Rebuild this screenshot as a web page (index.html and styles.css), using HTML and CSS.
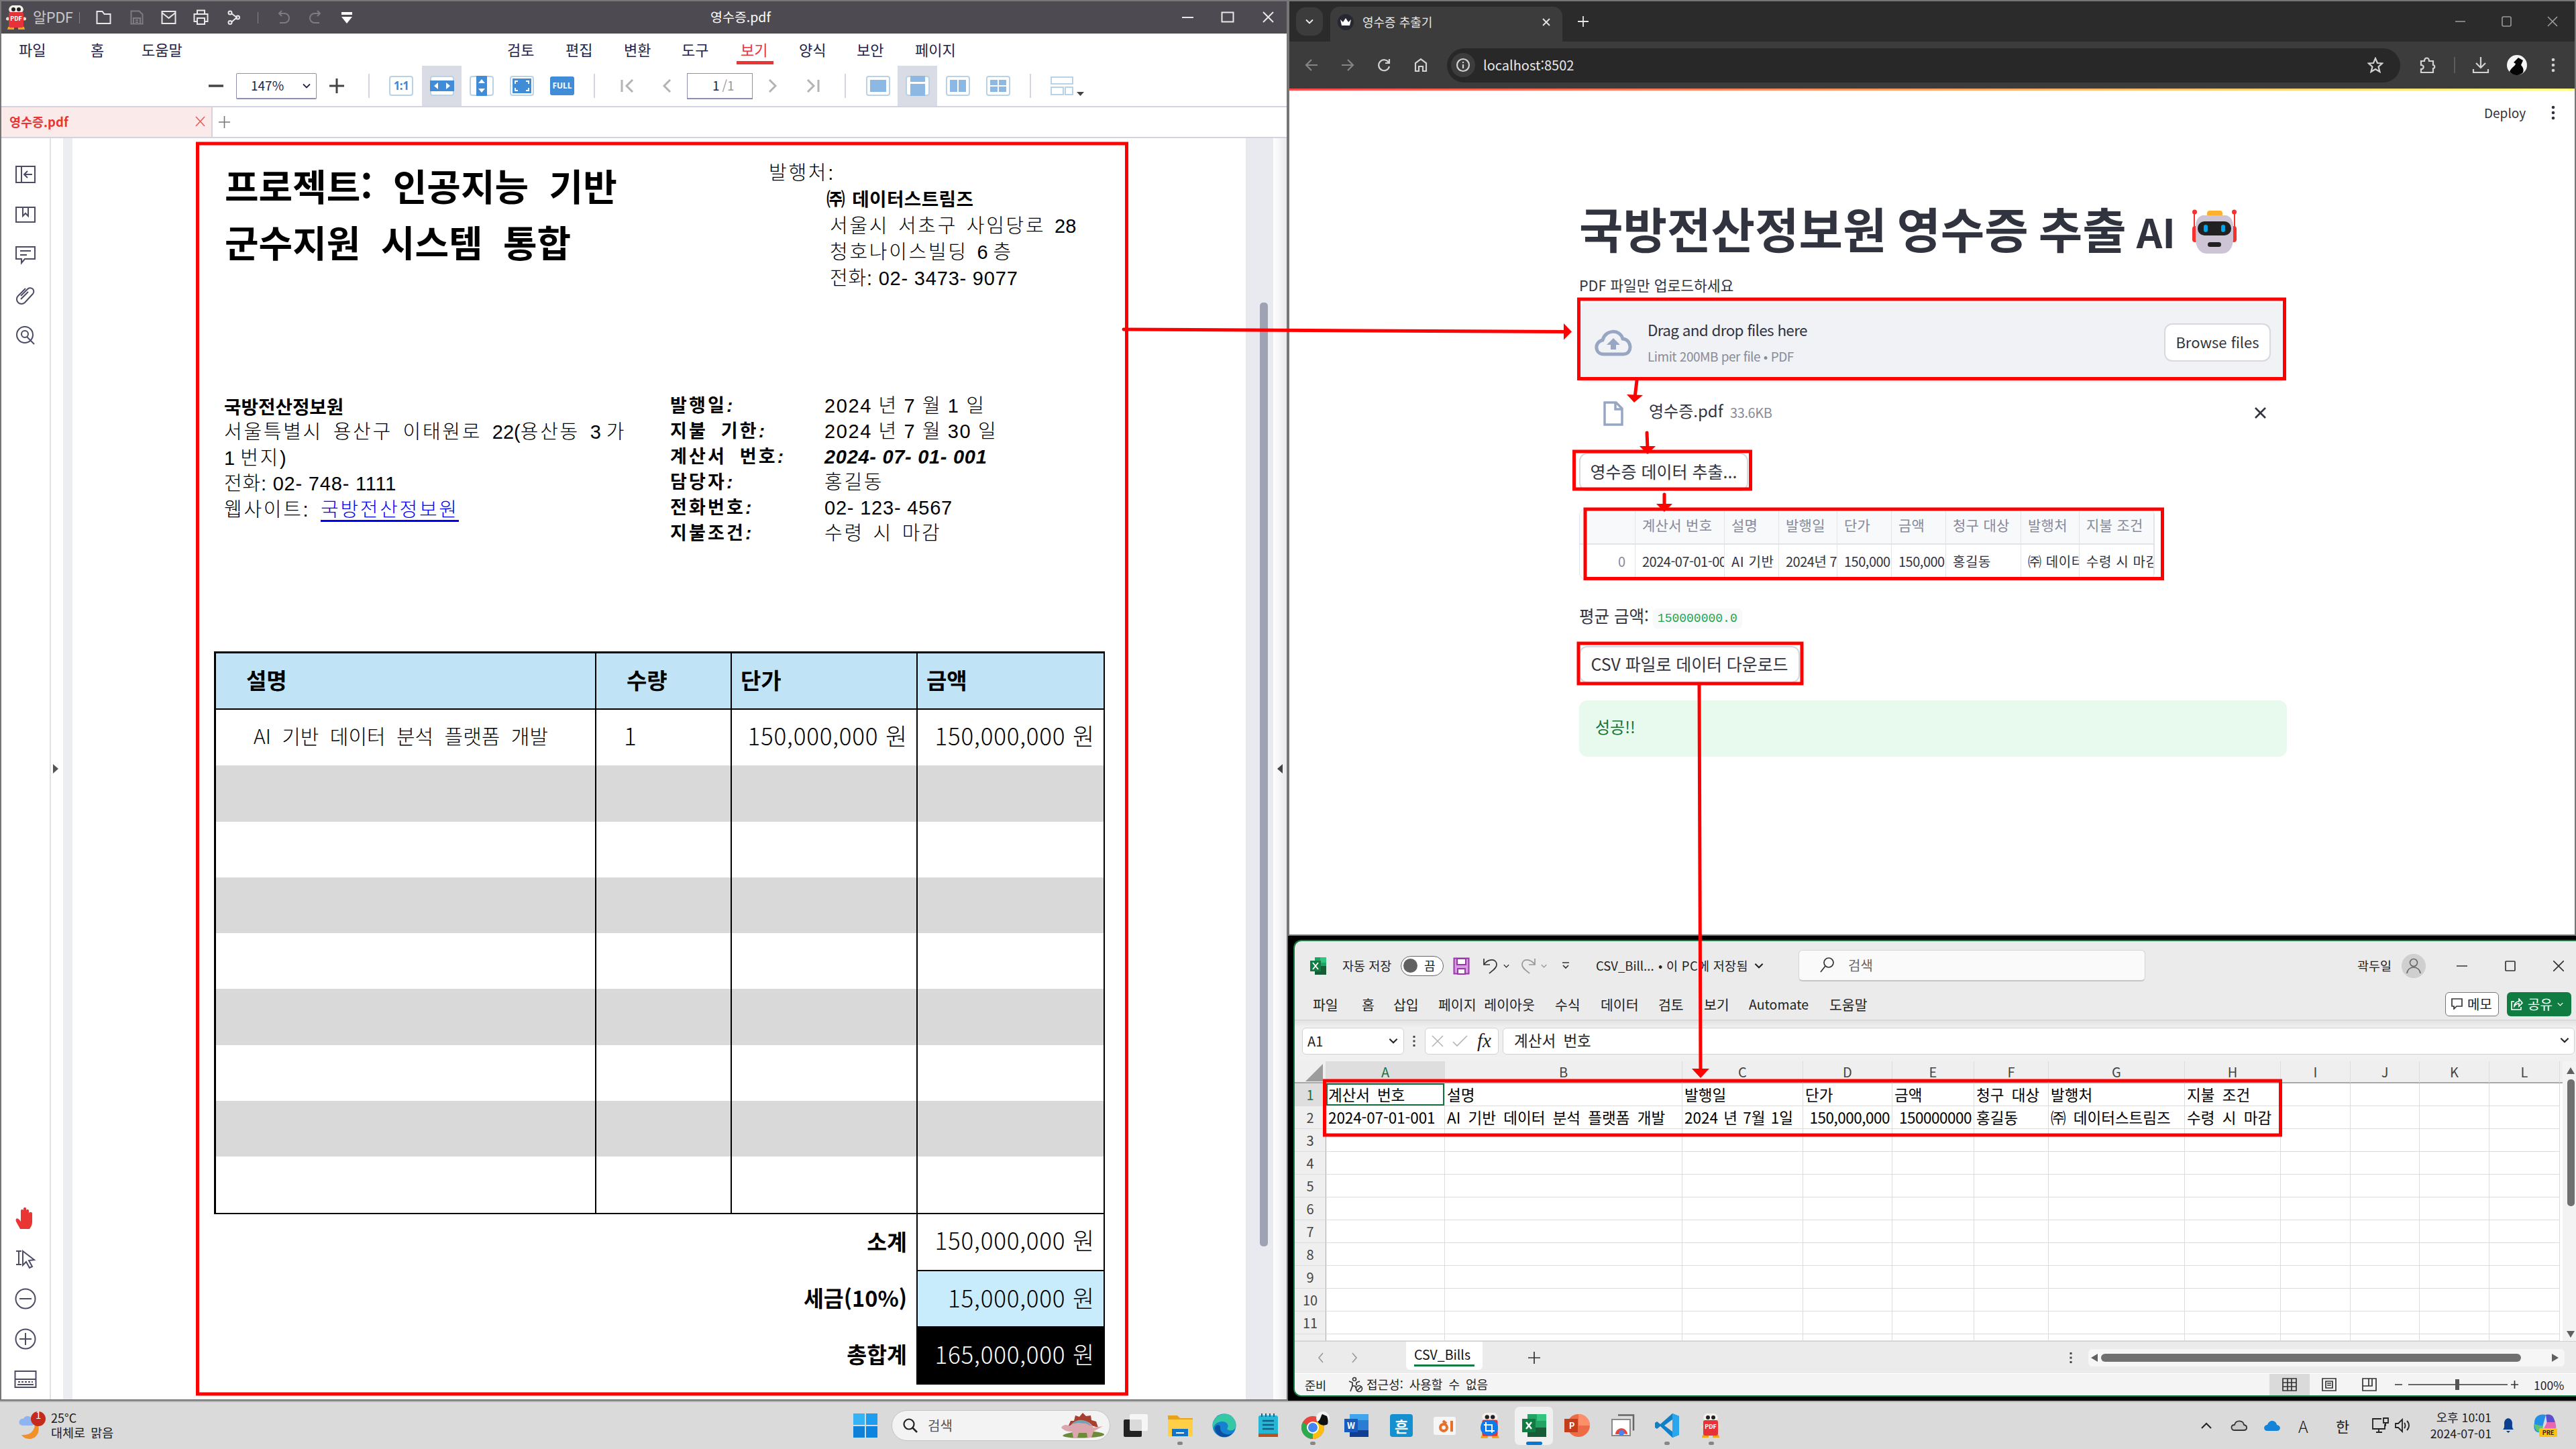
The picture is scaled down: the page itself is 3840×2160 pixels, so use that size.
FILE: index.html
```html
<!DOCTYPE html>
<html lang="ko">
<head>
<meta charset="utf-8">
<title>영수증 추출기</title>
<link rel="stylesheet" href="styles.css">
</head>
<body>
<svg class="defs" width="0" height="0">
  <symbol id="mascot" viewBox="0 0 30 36">
    <ellipse cx="15" cy="6" rx="11" ry="7" fill="#f4f1ec"/>
    <circle cx="11" cy="6" r="3" fill="#222"/><circle cx="19" cy="6" r="3" fill="#222"/>
    <path d="M3 32h9v4H2zM18 32h9l1 4H18z" fill="#f0a818"/>
    <circle cx="2.500" cy="20" r="2.500" fill="#f1dcc0"/><circle cx="27.500" cy="20" r="2.500" fill="#f1dcc0"/>
    <rect x="4" y="10" width="22" height="23" rx="3" fill="#e63238"/>
  </symbol>
  <symbol id="chev" viewBox="0 0 12 8"><path d="M1 1.500l5 5 5-5" fill="none" stroke="currentColor" stroke-width="1.800"/></symbol>
</svg>

<div class="desktop">
  <section class="pdf">
    <header class="pdf-title">
      <span class="stack"><svg width="30" height="36"><use href="#mascot"/></svg><b class="tiny">PDF</b></span>
      <span class="app">알PDF</span>
      <i class="sep"></i>
      <svg width="24" height="22" class="ln"><path d="M1.500 20V2h8l3 4h9v14z"/></svg>
      <svg width="20" height="22" class="ln dim"><path d="M1.500 20.500V1.500h12l5 5v14zM5 20v-8h10v8M8 15h4M8 18h4"/></svg>
      <svg width="23" height="22" class="ln"><path d="M1.500 2h20v18h-20zM1.500 4l10 8 10-8"/></svg>
      <svg width="23" height="24" class="ln"><path d="M6 7V1.500h11V7M6 18H1.500V7h20v11H17M6 13h11v9H6z"/></svg>
      <svg width="20" height="22" class="ln"><path d="M6 5l8 6-8 7"/><circle cx="4" cy="4" r="2.500"/><circle cx="15.500" cy="11" r="2.500"/><circle cx="4" cy="18.500" r="2.500"/></svg>
      <i class="sep"></i>
      <svg width="20" height="22" class="ln dim"><path d="M6 1L2 5l4 4M2 5h8a7 7 0 010 14H3"/></svg>
      <svg width="20" height="22" class="ln dim"><path d="M14 1l4 4-4 4M18 5h-8a7 7 0 000 14h7"/></svg>
      <svg width="16" height="19"><path d="M0 1h16v4H0zM0 8h16l-8 10z" fill="#fff"/></svg>
      <span class="doc">영수증.pdf</span>
      <svg width="18" height="18" class="ln"><path d="M0 9h17"/></svg>
      <svg width="20" height="18" class="ln"><path d="M1.500 1.500h17v14h-17z"/></svg>
      <svg width="18" height="18" class="ln"><path d="M1 1l15 15M16 1L1 16"/></svg>
    </header>
    <nav class="pdf-menu">
      <span>파일</span><span>홈</span><span>도움말</span><span>검토</span><span>편집</span><span>변환</span><span>도구</span><span class="on">보기</span><span>양식</span><span>보안</span><span>페이지</span>
    </nav>
    <div class="pdf-tools">
      <svg width="22" height="22"><path d="M0 11h22" stroke="#444" stroke-width="3.500"/></svg>
      <span class="zoombox">147%<svg width="12" height="8"><use href="#chev"/></svg></span>
      <svg width="22" height="22"><path d="M0 11h22M11 0v22" stroke="#444" stroke-width="3"/></svg>
      <i class="bar"></i>
      <span class="one">1:1</span>
      <span class="sel"><svg width="36" height="30"><rect x="1" y="1" width="34" height="28" rx="3" fill="#fff" stroke="#b9d2e6" stroke-width="2"/><path d="M0 7h36v16H0z" fill="#418cd6"/><path d="M12 10v10l-6-5zM24 10v10l6-5z" fill="#fff"/></svg></span>
      <svg width="36" height="30"><rect x="1" y="1" width="34" height="28" rx="3" fill="#fff" stroke="#b9d2e6" stroke-width="2"/><path d="M10 0h16v30H10z" fill="#418cd6"/><path d="M13 11h10l-5-6zM13 19h10l-5 6z" fill="#fff"/></svg>
      <svg width="36" height="30"><rect x="1" y="1" width="34" height="28" rx="3" fill="#fff" stroke="#b9d2e6" stroke-width="2"/><path d="M4 4h28v22H4z" fill="#418cd6"/><path d="M8 12V8h4M24 8h4v4M28 18v4h-4M12 22H8v-4" fill="none" stroke="#fff" stroke-width="2"/></svg>
      <span class="full">FULL</span>
      <i class="bar"></i>
      <svg width="20" height="20" class="nav"><path d="M2 1v18M18 1l-9 9 9 9"/></svg>
      <svg width="14" height="20" class="nav"><path d="M12 1l-9 9 9 9"/></svg>
      <span class="pagebox">1<em>/1</em></span>
      <svg width="14" height="20" class="nav"><path d="M2 1l9 9-9 9"/></svg>
      <svg width="20" height="20" class="nav"><path d="M2 1l9 9-9 9M18 1v18"/></svg>
      <i class="bar"></i>
      <svg width="36" height="30" class="pg"><rect x="1" y="1" width="34" height="28" rx="3"/><path d="M6 6h24v18H6z"/></svg>
      <span class="sel"><svg width="36" height="30" class="pg"><rect x="1" y="1" width="34" height="28" rx="3"/><path d="M7 0h22v9H7zM7 12h22v18H7z"/></svg></span>
      <svg width="36" height="30" class="pg"><rect x="1" y="1" width="34" height="28" rx="3"/><path d="M6 6h11v18H6zM19 6h11v18H19z"/></svg>
      <svg width="36" height="30" class="pg"><rect x="1" y="1" width="34" height="28" rx="3"/><path d="M6 6h11v8H6zM19 6h11v8H19zM6 16h11v8H6zM19 16h11v8H19z"/></svg>
      <i class="bar"></i>
      <svg width="50" height="30"><g fill="#fff" stroke="#b9d2e6" stroke-width="2"><path d="M1 2h32v10H1zM1 17h18v11H1zM22 17h11v11H22z"/></g><path d="M39 24h11l-5.500 6z" fill="#444"/></svg>
    </div>
    <div class="pdf-tabs">
      <div class="tab"><span>영수증.pdf</span><svg width="15" height="16"><path d="M1 1l13 14M14 1L1 15" stroke="#ec5b5b" stroke-width="1.600"/></svg></div>
      <svg width="17" height="18"><path d="M0 9h17M8.500 0v18" stroke="#777" stroke-width="1.600"/></svg>
    </div>
    <div class="pdf-body">
      <aside>
        <div>
          <svg width="32" height="32"><path d="M2 4h28v24H2zM10 4v24M26 16H15M19 11l-5 5 5 5"/></svg>
          <svg width="32" height="32"><path d="M2 5h28v22H2zM12 5v13l4-4 4 4V5"/></svg>
          <svg width="32" height="32"><path d="M2 4h28v18H15l-5 6v-6H2zM8 10h16M8 16h10"/></svg>
          <svg width="32" height="32"><path d="M9 17l10-10a5 5 0 018 7L15 27a7 7 0 01-10-10L16 6M9 22l11-11"/></svg>
          <svg width="32" height="32"><circle cx="15" cy="15" r="12"/><circle cx="15" cy="14" r="5"/><path d="M18 18l11 11"/></svg>
        </div>
        <div>
          <svg width="32" height="34"><path d="M8 33C5 26 0 21 2 18c2-2 5 1 7 4V6c0-3 4-3 4 0V3c0-3 4-3 4 0v3c0-3 4-3 4 0v4c0-3 5-3 5 0v13c0 4-2 7-4 10z" fill="#ea3535" stroke="none"/></svg>
          <svg width="32" height="32"><path d="M2 5h8M6 5v20M2 25h8M12 5l17 13-8 1 5 9-4 2-5-9-5 5z"/></svg>
          <svg width="34" height="34"><circle cx="17" cy="17" r="14.500"/><path d="M8 17h18"/></svg>
          <svg width="34" height="34"><circle cx="17" cy="17" r="14.500"/><path d="M8 17h18M17 8v18"/></svg>
          <svg width="34" height="28"><path d="M1.500 2h31v24h-31zM1.500 14h31M5 22h24" /><path d="M6 18h22" stroke-dasharray="3 2"/></svg>
        </div>
      </aside>
      <div class="gutter"><svg width="8" height="14"><path d="M0 0l8 7-8 7z" fill="#555"/></svg></div>
      <div class="strip"></div>
      <main class="paper">
        <div class="head">
          <h1>프로젝트: 인공지능 기반<br>군수지원 시스템 통합</h1>
          <div class="issuer">
            <p>발행처:</p>
            <p class="co">㈜ <span>데이터스트림즈</span></p>
            <p class="in">서울시 서초구 사임당로 <s>28</s></p>
            <p class="in">청호나이스빌딩 <s>6 </s>층</p>
            <p class="in num">전화: 02- 3473- 9077</p>
          </div>
        </div>
        <div class="meta">
          <div class="addr">
            <p class="co">국방전산정보원</p>
            <p>서울특별시 용산구 이태원로 <s>22(</s>용산동 <s>3 </s>가</p>
            <p><s>1 </s>번지)</p>
            <p class="num">전화: 02- 748- 1111</p>
            <p>웹사이트: <u>국방전산정보원</u></p>
          </div>
          <dl>
            <dt>발행일<i>:</i></dt><dd class="date">2024 년 7 월 1 일</dd>
            <dt>지불 기한<i>:</i></dt><dd class="date">2024 년 7 월 30 일</dd>
            <dt>계산서 번호<i>:</i></dt><dd class="bi">2024- 07- 01- 001</dd>
            <dt>담당자<i>:</i></dt><dd>홍길동</dd>
            <dt>전화번호<i>:</i></dt><dd class="num">02- 123- 4567</dd>
            <dt>지불조건<i>:</i></dt><dd>수령 시 마감</dd>
          </dl>
        </div>
        <div class="items">
          <div class="ir th"><span>설명</span><span>수량</span><span>단가</span><span>금액</span></div>
          <div class="ir td"><span>AI 기반 데이터 분석 플랫폼 개발</span><span>1</span><span>150,000,000 원</span><span>150,000,000 원</span></div>
          <div class="ir g"><span></span><span></span><span></span><span></span></div>
          <div class="ir"><span></span><span></span><span></span><span></span></div>
          <div class="ir g"><span></span><span></span><span></span><span></span></div>
          <div class="ir"><span></span><span></span><span></span><span></span></div>
          <div class="ir g"><span></span><span></span><span></span><span></span></div>
          <div class="ir"><span></span><span></span><span></span><span></span></div>
          <div class="ir g"><span></span><span></span><span></span><span></span></div>
          <div class="ir"><span></span><span></span><span></span><span></span></div>
        </div>
        <div class="sums">
          <b>소계</b><span>150,000,000 원</span>
          <b>세금(10%)</b><span class="blue">15,000,000 원</span>
          <b>총합계</b><span class="black">165,000,000 원</span>
        </div>
      </main>
      <div class="strip wide"><i class="thumb"></i></div>
      <div class="edge"><svg width="8" height="14"><path d="M8 0L0 7l8 7z" fill="#444"/></svg></div>
    </div>
  </section>

  <section class="right">
    <div class="chrome">
      <div class="ctabs">
        <span class="cdd"><svg width="12" height="8"><use href="#chev"/></svg></span>
        <div class="ctab">
          <svg width="24" height="24"><circle cx="12" cy="12" r="12" fill="#262730"/><path d="M4 8l4 4 4-6 4 6 4-4-2 9H6z" fill="#fff"/></svg>
          <span>영수증 추출기</span>
          <svg width="12" height="12" class="x"><path d="M1 1l10 10M11 1L1 11"/></svg>
        </div>
        <svg width="16" height="16" class="x"><path d="M0 8h16M8 0v16"/></svg>
        <svg width="16" height="16" class="w"><path d="M0 8h15"/></svg>
        <svg width="16" height="16" class="w"><rect x="1" y="1" width="13" height="14" rx="2"/></svg>
        <svg width="16" height="16" class="w"><path d="M1 1l14 14M15 1L1 15"/></svg>
      </div>
      <div class="cbar">
        <svg width="20" height="20" class="dm"><path d="M19 10H2M10 2l-8 8 8 8"/></svg>
        <svg width="20" height="20" class="dm"><path d="M1 10h17M10 2l8 8-8 8"/></svg>
        <svg width="20" height="20"><path d="M17 6a8 8 0 10 1 6M18 1v6h-6"/></svg>
        <svg width="20" height="22"><path d="M2 20V8l8-6 8 6v12h-5v-7H7v7z"/></svg>
        <div class="omni">
          <i><svg width="22" height="22"><circle cx="11" cy="11" r="9"/><path d="M11 10v6M11 6v2"/></svg></i>
          <span>localhost:8502</span>
          <svg width="24" height="24"><path d="M12 2l3 7 7 .5-5.500 5 2 7.500-6.500-4-6.500 4 2-7.500L2 9.500 9 9z"/></svg>
        </div>
        <svg width="26" height="26"><path d="M3 7h5c0-6 7-6 7 0h6v6c3 0 3 5 0 5v6H3v-5c5 0 5-6 0-6z"/></svg>
        <i class="cs"></i>
        <svg width="26" height="26"><path d="M13 1v15M6 10l7 7 7-7M2 19v5h22v-5"/></svg>
        <svg width="30" height="30"><circle cx="15" cy="15" r="15" fill="#f5f5f5" stroke="none"/><path d="M4 25c2-6 8-8 9-12l-3-2 7-7 7 4-3 7c4 4 4 8 3 11-6 6-15 5-20-1z" fill="#050505" stroke="none"/></svg>
        <svg width="6" height="22" class="dots"><circle cx="3" cy="3" r="2.300"/><circle cx="3" cy="11" r="2.300"/><circle cx="3" cy="19" r="2.300"/></svg>
      </div>
      <div class="rainbow"></div>
      <div class="deploy"><span>Deploy</span><svg width="6" height="22"><g fill="#31333f"><circle cx="3" cy="3" r="2.300"/><circle cx="3" cy="11" r="2.300"/><circle cx="3" cy="19" r="2.300"/></g></svg></div>
      <div class="app-main">
        <h2>국방전산정보원 영수증 추출 <span>AI</span>
          <svg width="66" height="66" viewBox="0 0 66 66"><path d="M3 6v28M63 6v28" stroke="#f8312f" stroke-width="2"/><circle cx="3.500" cy="4" r="3.500" fill="#f8312f"/><circle cx="62.500" cy="4" r="3.500" fill="#f8312f"/><rect x="0" y="25" width="10" height="24" rx="4" fill="#f8312f"/><rect x="56" y="25" width="10" height="24" rx="4" fill="#f8312f"/><rect x="22" y="2" width="23" height="10" rx="4" fill="#ffb02e"/><path d="M17 9h32c8 0 12 8 12 16v20c0 12-7 21-16 21H21C12 66 5 57 5 45V25C5 17 9 9 17 9z" fill="#cdc4d6"/><rect x="8" y="18" width="50" height="21" rx="10" fill="#212121"/><rect x="17" y="23" width="6" height="11" rx="3" fill="#00a6ed"/><rect x="43" y="23" width="6" height="11" rx="3" fill="#00a6ed"/><rect x="23" y="49" width="20" height="7" rx="3.500" fill="#212121"/></svg>
        </h2>
        <label>PDF 파일만 업로드하세요</label>
        <div class="drop">
          <svg width="56" height="40" viewBox="0 0 56 40"><path d="M14 37C0 37-1 19 12 16 16 0 38-1 42 14c14 1 15 23 1 23z" fill="none" stroke="#97a6c3" stroke-width="5"/><path d="M28 13l10 10h-6v7h-8v-7h-6z" fill="#97a6c3"/></svg>
          <div><p>Drag and drop files here</p><small>Limit 200MB per file • PDF</small></div>
          <button>Browse files</button>
        </div>
        <div class="file">
          <svg width="30" height="37"><path d="M2 2h17l9 9v24H2zM18 2v10h10" fill="none" stroke="#97a6c3" stroke-width="3.500"/></svg>
          <span>영수증.pdf</span><small>33.6KB</small>
          <svg width="18" height="18"><path d="M1 1l15 15M16 1L1 16" stroke="#31333f" stroke-width="2.600"/></svg>
        </div>
        <button class="b1">영수증 데이터 추출...</button>
        <div class="df">
          <div class="dh"><span></span><span>계산서 번호</span><span>설명</span><span>발행일</span><span>단가</span><span>금액</span><span>청구 대상</span><span>발행처</span><span>지불 조건</span></div>
          <div class="dr"><span>0</span><span>2024-07-01-001</span><span>AI 기반</span><span>2024년 7월</span><span>150,000</span><span>150,000</span><span>홍길동</span><span>㈜ 데이터</span><span>수령 시 마감</span></div>
        </div>
        <div class="avg">평균 금액: <code>150000000.0</code></div>
        <button class="b2">CSV 파일로 데이터 다운로드</button>
        <div class="ok">성공!!</div>
      </div>
    </div>

    <div class="xl-wrap"><div class="xl">
      <div class="xt">
        <svg width="25" height="26"><path d="M7 0h17v26H7z" fill="#21a366"/><path d="M15 0h9v8h-9z" fill="#33c481"/><path d="M15 13h9v13H7V13z" fill="#185c37"/><path d="M0 5h16v16H0z" fill="#107c41"/><path d="M4 8l8 10M12 8L4 18" stroke="#fff" stroke-width="2"/></svg>
        <span>자동 저장</span>
        <span class="tog"><i></i>끔</span>
        <svg width="25" height="26"><path d="M1.500 1.500h22v23h-22z" fill="#d79ce0" stroke="#9a35ab" stroke-width="2"/><path d="M6 2h13v9H6zM7 17h11v8H7z" fill="#fff" stroke="#9a35ab" stroke-width="2"/></svg>
        <svg width="24" height="26" class="k"><path d="M2 2v9h9M2 11C9 1 21 2 21 11c0 5-5 8-11 13"/></svg>
        <svg width="9" height="6" class="chv"><use href="#chev"/></svg>
        <svg width="24" height="26" class="k dimx"><path d="M21 2v9h-9M21 11C14 1 2 2 2 11c0 5 5 8 11 13"/></svg>
        <svg width="9" height="6" class="chv dimx"><use href="#chev"/></svg>
        <svg width="12" height="12" class="k"><path d="M1 1h10M2 5l4 4 4-4"/></svg>
        <span class="f18">CSV_Bill...</span>
        <span class="saved">• 이 PC에 저장됨</span>
        <svg width="14" height="9"><use href="#chev"/></svg>
        <div class="xs"><svg width="22" height="24" class="k"><circle cx="13" cy="8" r="7"/><path d="M8 13L1 22"/></svg><span>검색</span></div>
        <span>곽두일</span>
        <svg width="36" height="36"><circle cx="18" cy="18" r="18" fill="#cfcfcf"/><g fill="none" stroke="#666" stroke-width="1.600"><circle cx="18" cy="13" r="5.500"/><path d="M8 29c1-12 19-12 20 0"/></g></svg>
        <svg width="16" height="16" class="k"><path d="M0 8h16"/></svg>
        <svg width="16" height="16" class="k"><rect x="1" y="1" width="14" height="14" rx="1"/></svg>
        <svg width="16" height="16" class="k"><path d="M0 0l16 16M16 0L0 16"/></svg>
      </div>
      <div class="xm">
        <span>파일</span><span>홈</span><span>삽입</span><span>페이지 레이아웃</span><span>수식</span><span>데이터</span><span>검토</span><span>보기</span><span class="au">Automate</span><span>도움말</span>
        <span class="memo"><svg width="17" height="17" class="k"><path d="M1 1h15v11H8l-4 4v-4H1z"/></svg>메모</span>
        <span class="share"><svg width="18" height="18" class="kw"><path d="M5 5H1v12h14v-4M5 12c0-5 4-7 7-7V1l5 6-5 5V8c-3 0-5 1-7 4z"/></svg>공유<svg width="9" height="6"><use href="#chev"/></svg></span>
      </div>
      <div class="xf">
        <span class="nb">A1<svg width="14" height="9"><use href="#chev"/></svg></span>
        <svg width="4" height="18"><path d="M2 1v16" stroke="#444" stroke-width="3" stroke-dasharray="3 3.500"/></svg>
        <span class="fx"><svg width="18" height="18"><path d="M1 1l16 16M17 1L1 17" stroke="#b5b5b5" stroke-width="1.600"/></svg><svg width="24" height="18"><path d="M1 10l6 6L22 1" fill="none" stroke="#b5b5b5" stroke-width="1.600"/></svg><em>fx</em></span>
        <span class="fi">계산서 번호<svg width="14" height="9"><use href="#chev"/></svg></span>
      </div>
      <div class="xsheet">
        <div class="cells">
          <div class="r hd"><span><svg width="26" height="26"><path d="M26 0v26H0z" fill="#9c9c9c"/></svg></span><span class="act">A</span><span>B</span><span>C</span><span>D</span><span>E</span><span>F</span><span>G</span><span>H</span><span>I</span><span>J</span><span>K</span><span>L</span></div>
          <div class="r"><b class="act">1</b><span class="cur">계산서 번호</span><span>설명</span><span>발행일</span><span>단가</span><span>금액</span><span>청구 대상</span><span>발행처</span><span>지불 조건</span><span></span><span></span><span></span><span></span></div>
          <div class="r"><b>2</b><span>2024-07-01-001</span><span>AI 기반 데이터 분석 플랫폼 개발</span><span class="d">2024 년 7월 1일</span><span class="n">150,000,000</span><span class="n">150000000</span><span>홍길동</span><span>㈜ 데이터스트림즈</span><span>수령 시 마감</span><span></span><span></span><span></span><span></span></div>
          <div class="r"><b>3</b><span></span><span></span><span></span><span></span><span></span><span></span><span></span><span></span><span></span><span></span><span></span><span></span></div>
          <div class="r"><b>4</b><span></span><span></span><span></span><span></span><span></span><span></span><span></span><span></span><span></span><span></span><span></span><span></span></div>
          <div class="r"><b>5</b><span></span><span></span><span></span><span></span><span></span><span></span><span></span><span></span><span></span><span></span><span></span><span></span></div>
          <div class="r"><b>6</b><span></span><span></span><span></span><span></span><span></span><span></span><span></span><span></span><span></span><span></span><span></span><span></span></div>
          <div class="r"><b>7</b><span></span><span></span><span></span><span></span><span></span><span></span><span></span><span></span><span></span><span></span><span></span><span></span></div>
          <div class="r"><b>8</b><span></span><span></span><span></span><span></span><span></span><span></span><span></span><span></span><span></span><span></span><span></span><span></span></div>
          <div class="r"><b>9</b><span></span><span></span><span></span><span></span><span></span><span></span><span></span><span></span><span></span><span></span><span></span><span></span></div>
          <div class="r"><b>10</b><span></span><span></span><span></span><span></span><span></span><span></span><span></span><span></span><span></span><span></span><span></span><span></span></div>
          <div class="r"><b>11</b><span></span><span></span><span></span><span></span><span></span><span></span><span></span><span></span><span></span><span></span><span></span><span></span></div>
          <div class="r last"><b></b><span></span><span></span><span></span><span></span><span></span><span></span><span></span><span></span><span></span><span></span><span></span><span></span></div>
        </div>
        <div class="vs"><svg width="12" height="10"><path d="M6 0l6 10H0z" fill="#606060"/></svg><i></i><svg width="12" height="10"><path d="M0 0h12L6 10z" fill="#606060"/></svg></div>
      </div>
      <div class="xtabs">
        <svg width="10" height="16" class="nv"><path d="M8 1L2 8l6 7"/></svg>
        <svg width="10" height="16" class="nv"><path d="M2 1l6 7-6 7"/></svg>
        <div class="st"><span>CSV_Bills</span></div>
        <svg width="18" height="18" class="k"><path d="M0 9h18M9 0v18"/></svg>
        <svg width="4" height="18"><path d="M2 1v16" stroke="#444" stroke-width="3" stroke-dasharray="3 3.500"/></svg>
        <div class="hs"><svg width="10" height="12"><path d="M10 0v12L0 6z" fill="#606060"/></svg><i></i><svg width="10" height="12"><path d="M0 0v12l10-6z" fill="#606060"/></svg></div>
      </div>
      <div class="xstat">
        <span>준비</span>
        <svg width="24" height="24" class="k"><circle cx="10" cy="4" r="2.500"/><path d="M2 7l5 2v5l-3 8M18 7l-5 2v4M7 14h4l1 3"/><circle cx="17" cy="18" r="4.500"/><path d="M14 21l6-6"/></svg>
        <span class="acc">접근성: 사용할 수 없음</span>
        <span class="vw"><svg width="22" height="20" class="k"><path d="M1 1h20v18H1zM1 7h20M1 13h20M8 1v18M14 1v18"/></svg></span>
        <svg width="22" height="20" class="k"><path d="M1 1h20v18H1zM6 5h10v10H6zM8 8h6M8 11h6"/></svg>
        <svg width="22" height="20" class="k"><path d="M1 1h20v18H1zM1 12h9V1M15 1v11h-5"/></svg>
        <svg width="190" height="20" class="k"><path d="M0 10h11M173 10h11M178.500 4v12"/><path d="M20 10h148" stroke="#666" stroke-width="2"/><path d="M93 2v16" stroke="#555" stroke-width="6"/></svg>
        <span class="pc">100%</span>
      </div>
    </div></div>
  </section>
</div>

<footer class="taskbar">
  <svg width="40" height="44"><path d="M1 20c-2-6 3-9 6-8 2-6 12-5 12 1 6 1 5 9 0 9H5z" fill="#8fb4f0"/><path d="M29 22c3 10-3 20-13 20-6 0-10-3-12-6 12 1 20-5 20-17z" fill="#f2902a"/><circle cx="29" cy="12" r="11" fill="#c42b1c"/></svg>
  <div class="wx"><p>25°C</p><p>대체로 맑음</p></div>
  <svg width="36" height="36"><g fill="#0a84e0"><path d="M0 0h17v17H0z" fill="#35b3f5"/><path d="M19 0h17v17H19z" fill="#1d9df0"/><path d="M0 19h17v17H0z" fill="#0e80d8"/><path d="M19 19h17v17H19z"/></g></svg>
  <div class="ts"><svg width="22" height="22"><circle cx="9" cy="9" r="7.500" fill="none" stroke="#222" stroke-width="2.200"/><path d="M14 14l7 7" stroke="#222" stroke-width="2.500"/></svg><span>검색</span>
    <svg width="68" height="38"><path d="M4 34c8-8 58-8 62-2 2 6-58 8-62 2z" fill="#6c8a3a"/><path d="M12 21l4-9 5 0 2-8 6 2 5-6 5 5 7-1 1 7 7 2 3 9-10-3-24-4z" fill="#a8402f"/><path d="M2 22c4-6 10-4 13-2 8-11 28-12 35 2l14-2-14 8-3 9h-6l-1-7H28l-2 7h-6l-2-9c-6 0-12-1-16-6z" fill="#dba6ae"/><path d="M17 17c10-10 24-7 30 3l-8-4-12-1z" fill="#6ea3b8"/></svg></div>
  <svg width="36" height="36"><rect x="0" y="9" width="27" height="26" rx="2" fill="#222"/><rect x="9" y="1" width="27" height="25" rx="2" fill="#fafafa" opacity=".85"/></svg>
  <svg width="38" height="36"><path d="M0 3h14l4 4h19v27H0z" fill="#e9a21a"/><path d="M0 9h37v25H0z" fill="#ffcf48"/><path d="M6 23h24v11H6z" fill="#1273c8"/><path d="M12 29h12" stroke="#fff" stroke-width="2"/></svg>
  <svg width="38" height="36"><circle cx="18" cy="18" r="17.500" fill="#1581d0"/><path d="M1 15C5-3 32-5 35 15c2 12-10 12-13 8 4-5 0-11-7-11-8 0-13 5-14 12z" fill="#36c8a5"/><path d="M12 20c-1 9 8 14 18 10-8 9-25 6-26-8 1-6 8-6 8-2z" fill="#0b4fa0"/></svg>
  <svg width="30" height="36"><rect x="0" y="3" width="29" height="32" rx="3" fill="#27b7d6"/><path d="M0 30h29v5H0z" fill="#b8541f"/><path d="M6 11h17M6 17h17M6 23h17" stroke="#0d5f86" stroke-width="2.500"/><path d="M5 0v5M11 0v5M17 0v5M23 0v5" stroke="#13698b" stroke-width="2"/></svg>
  <svg width="44" height="42"><circle cx="18" cy="24" r="17" fill="#e8453c"/><path d="M3 16a17 17 0 0013 25l8-12z" fill="#2da94f"/><path d="M18 41a17 17 0 0015-25H18z" fill="#fbbf12"/><circle cx="18" cy="24" r="8" fill="#4285f4" stroke="#fff" stroke-width="2"/><circle cx="33" cy="10" r="10" fill="#f3f3f3"/><path d="M25 15c4-1 4-6 7-11l7 3c2 5 2 8 1 12-5 3-12 2-15-4z" fill="#111"/></svg>
  <span class="stack"><svg width="36" height="34"><path d="M8 0h28v34H8z" fill="#2b7cd3"/><path d="M8 0h28v9H8z" fill="#41a5ee"/><path d="M8 24h28v10H8z" fill="#103f91"/><path d="M0 7h20v20H0z" fill="#185abd"/></svg><b class="lw">W</b></span>
  <span class="stack"><svg width="34" height="34"><rect width="34" height="34" rx="4" fill="#148fd0"/></svg><b class="lh">흔</b></span>
  <svg width="36" height="32"><rect width="33" height="27" y="3" rx="3" fill="#f6f6f6"/><circle cx="15" cy="19" r="5" fill="none" stroke="#e8702a" stroke-width="4"/><path d="M14 9l5 4M27 9v16" stroke="#e8702a" stroke-width="4"/></svg>
  <svg width="34" height="38"><use href="#mascot"/><rect x="3" y="11" width="26" height="22" rx="10" fill="#0a7cf0"/><path d="M11 14v13h13M8 18h12v12" fill="none" stroke="#fff" stroke-width="2"/></svg>
  <span class="hot"><svg width="36" height="34"><path d="M8 0h28v34H8z" fill="#21a366"/><path d="M22 0h14v10H22z" fill="#33c481"/><path d="M8 20h28v14H8z" fill="#185c37"/><path d="M0 7h20v20H0z" fill="#107c41"/><path d="M6 12l8 10M14 12L6 22" stroke="#fff" stroke-width="2.500"/></svg></span>
  <span class="stack"><svg width="38" height="34"><circle cx="21" cy="17" r="17" fill="#ed6c47"/><path d="M21 0a17 17 0 0117 17H21z" fill="#ff8f6b"/><path d="M0 7h20v20H0z" fill="#c43e1c"/></svg><b class="lw">P</b></span>
  <svg width="36" height="34"><path d="M10 1.500h23v23" fill="#ddd" stroke="#666" stroke-width="2.500"/><rect x="1" y="8" width="27" height="24" fill="#fff" stroke="#888" stroke-width="2"/><path d="M6 30a9 9 0 0118 0z" fill="#e8453c"/><path d="M6 30l9-2v2z" fill="#2da94f"/><path d="M24 30h-9v-2z" fill="#fbbf12"/><circle cx="15" cy="28" r="4" fill="#4285f4"/></svg>
  <svg width="38" height="36"><path d="M26 0l10 4v28l-10 4L8 19l-5 4-3-2V14l3-2 5 4z" fill="#0f7fc8"/><path d="M26 9v18L14 18z" fill="#dadada"/><path d="M26 0l10 4v28l-10 4z" fill="#2aa6ef"/></svg>
  <span class="stack"><svg width="30" height="36"><use href="#mascot"/></svg><b class="tiny">PDF</b></span>
  <svg width="16" height="10"><path d="M1 9l7-7 7 7" fill="none" stroke="#222" stroke-width="2"/></svg>
  <svg width="26" height="18"><path d="M6 16c-6 0-6-8 0-8 2-8 13-7 14 0 6 1 5 8 0 8z" fill="#c9c9c9" stroke="#333" stroke-width="1.800"/></svg>
  <svg width="26" height="18"><path d="M6 17c-7 0-6-9 0-9 3-9 13-7 14 0 7 1 6 9 0 9z" fill="#1583d8"/></svg>
  <span class="ta">A</span>
  <span class="th2">한</span>
  <svg width="26" height="24"><path d="M14 2H1v15h18V10M6 22h9M10 17v5M17 1h7v7h-7zM20 8v5" fill="none" stroke="#222" stroke-width="1.800"/></svg>
  <svg width="24" height="22"><path d="M1 8h4l6-6v18l-6-6H1zM14 7c2 2 2 6 0 8M18 4c4 4 4 10 0 14" fill="none" stroke="#222" stroke-width="1.800"/></svg>
  <div class="clk"><p>오후 10:01</p><p>2024-07-01</p></div>
  <svg width="20" height="24"><path d="M2 18c3-3 2-7 2-10 1-9 11-9 12 0 0 3-1 7 2 10zM7 20h6l-3 3z" fill="#0b3f91"/></svg>
  <span class="stack"><svg width="38" height="36"><path d="M3 14C3 3 12 0 20 2l-7 26C3 30 1 22 3 14z" fill="#2290e8"/><path d="M20 2c10-2 12 4 14 12l-12 2z" fill="#5a4fd0"/><path d="M34 13c4 12-2 18-12 16l-8-1 8-15z" fill="#e667b2"/><path d="M3 16c1 9 4 12 11 12l2-9z" fill="#5fc46b"/><rect x="10" y="22" width="27" height="13" rx="2" fill="#fdc310"/></svg><b class="pre">PRE</b></span>
</footer>
<b class="badge">1</b>
<i class="run r1"></i><i class="run r2"></i><i class="run r3"></i><i class="run r4"></i><i class="run act5"></i>

<svg class="marks" width="3840" height="2160">
  <g fill="none" stroke="#f00" stroke-width="5">
    <rect x="294.500" y="214" width="1385" height="1864"/>
    <rect x="2353.500" y="446" width="1052" height="118.500"/>
    <rect x="2346.500" y="673" width="263" height="56"/>
    <rect x="2363" y="759" width="860.500" height="103.500"/>
    <rect x="2353" y="959" width="333" height="60"/>
    <rect x="1974.500" y="1611" width="1425" height="81"/>
    <path d="M1675 491L2334 494.500M2440 567l-3 26M2455 645l1 24M2481 737v18M2533 1021l2 574" stroke-linecap="round"/>
  </g>
  <path fill="#f00" d="M2331 482l12 12.500-12 12zM2425 588l24 1-13 11zM2444 665h24l-12 12zM2469 751h24l-12 12zM2522 1593h26l-13 14z"/>
</svg>
</body>
</html>
```
FILE: styles.css
```css
* { box-sizing: border-box; margin: 0; padding: 0; }
body {
  width: 3840px; height: 2160px; overflow: hidden; position: relative;
  background: #dadada; color: #222;
  font-family: "Noto Sans CJK KR", "Noto Sans", sans-serif;
  font-size: 20px; line-height: 1.2; white-space: nowrap;
}
svg { display: block; flex: none; }
.defs { position: absolute; }
i, em { font-style: normal; }
s { text-decoration: none; letter-spacing: 0; word-spacing: 0; }
button { font-family: inherit; color: #31333f; background: #fff; border: 2px solid #d8d9dd; border-radius: 12px; display: block; }
.stack { display: grid; align-items: center; justify-items: center; width: max-content; }
.stack > * { grid-area: 1 / 1; }
.tiny { color: #fff; font-size: 9px; padding-top: 4px; }
.desktop { display: grid; grid-template-columns: 1920px 1920px; height: 2088px; }

/* PDF viewer */
.pdf { border: 2px solid #767676; background: #fff; display: flex; flex-direction: column; color: #22224a; height: 2088px; }
.pdf-title { height: 48px; background: #4d4b51; display: grid; align-items: center; padding-left: 7px;
  grid-template-columns: 40px 69px 25px 51px 46px 48px 51px 45px 30px 45px 50px 550px 703px 58px 62px auto; }
.pdf-title .app { color: #c6c6c8; font-size: 22px; letter-spacing: -.5px; margin-top: -4px; }
.pdf-title .doc { color: #fff; font-size: 19.500px; margin-top: -3px; }
.pdf-title .sep { width: 1px; height: 17px; background: #85848a; }
.ln { fill: none; stroke: #e8e8e8; stroke-width: 2; }
.ln.dim { stroke: #7d7c82; }
.pdf-menu { height: 48px; display: grid; align-items: center; padding: 0 0 2px 26px; font-size: 22px;
  grid-template-columns: 107px 76px 545px 87px 87px 86px 88px 87px 86px 87px auto; }
.pdf-menu .on { color: #ea3535; position: relative; }
.pdf-menu .on::after { content: ""; position: absolute; left: -6px; top: 31px; width: 55px; height: 5px; background: #ea3535; }
.pdf-tools { height: 60px; display: grid; align-items: center; padding-left: 309px;
  grid-template-columns: 41px 139px 58px 31px 49px 71px 60px 60px 65px 40px 62px 37px 121px 57px 57px 32px 47px 72px 60px 65px 31px auto; }
.zoombox { width: 120px; height: 39px; border: 1px solid #8e8eb5; border-bottom-width: 2px; border-radius: 2px; display: flex; align-items: center; justify-content: space-between; padding: 0 8px 0 21px; font-size: 19px; }
.pagebox { width: 98px; height: 39px; border: 1px solid #8e8eb5; border-bottom-width: 2px; display: flex; align-items: center; padding-left: 37px; gap: 4px; font-size: 19px; }
.pagebox em { color: #999; }
.bar { width: 2px; height: 36px; background: #d5d5e0; }
.one { width: 36px; height: 30px; border: 2px solid #b9d2e6; border-radius: 4px; color: #418cd6; font: bold 17px/25px "Noto Sans", sans-serif; text-align: center; letter-spacing: -.5px; }
.full { width: 36px; height: 28px; border-radius: 3px; background: #418cd6; color: #fff; font: bold 12px/28px "Noto Sans", sans-serif; text-align: center; }
.sel { width: 59px; height: 60px; background: #d9dce4; display: grid; place-items: center; }
.nav { fill: none; stroke: #b4b4b8; stroke-width: 3; }
.pg rect { fill: #fff; stroke: #b9d2e6; stroke-width: 2; }
.pg path { fill: #8cb8e3; }
.pdf-tabs { height: 48px; border-top: 2px solid #d3d3e0; border-bottom: 2px solid #d3d3e0; display: flex; align-items: center; }
.tab { width: 315px; height: 44px; background: #faeaea; border-right: 2px solid #d3d3e0; display: flex; align-items: center; justify-content: space-between; padding: 0 9px 2px 12px; color: #ea3535; font-weight: bold; font-size: 18.500px; margin-right: 9px; }
.pdf-body { flex: 1; display: flex; min-height: 0; }
aside { width: 74px; border-right: 2px solid #e0e0e6; display: flex; flex-direction: column; justify-content: space-between; padding-top: 24px; }
aside div { display: grid; grid-auto-rows: 60px; place-items: center; }
aside svg { fill: none; stroke: #4c4c66; stroke-width: 2; }
.gutter { width: 18px; padding: 933px 0 0 3px; }
.strip { width: 14px; background: #ecedf1; }
.wide { width: 41px; padding: 245px 0 0 21px; background: #e9eaef; }
.thumb { display: block; width: 12px; height: 1407px; border-radius: 5px; background: #9fa2b2; }
.edge { width: 20px; padding: 933px 0 0 6px; background: linear-gradient(90deg, #fff, #e9e9ec); }
.paper { flex: 1; color: #000; font-family: "Liberation Sans", "Noto Sans CJK KR", sans-serif; font-size: 29px; }
.head { height: 380px; padding: 31px 0 0 227px; display: grid; grid-template-columns: 811px auto; align-items: start; }
h1 { font: bold 55px/84px "Noto Sans CJK KR", sans-serif; word-spacing: 15px; margin-top: -4px; }
.issuer { padding-top: 2px; }
.issuer p { height: 39.300px; line-height: 39.300px; }
.issuer, .addr, dl { word-spacing: 3px; letter-spacing: 2.700px; font-weight: 300; }
.issuer .co, .addr .co { font: bold 27.700px/39px "Noto Sans CJK KR", sans-serif; letter-spacing: 0; }
.issuer .co { padding-left: 86px; word-spacing: 2px; letter-spacing: .4px; margin: -2px 0 2px; }
.in { padding-left: 91px; }
.issuer .num, .addr .num, dl .num { word-spacing: 0; letter-spacing: .8px; }
.meta { height: 385px; padding-left: 226px; display: grid; grid-template-columns: 665px auto; align-items: start; }
.addr { word-spacing: 5px; }
.addr p { height: 38.800px; line-height: 38px; }
u { color: #00f; text-decoration: none; border-bottom: 3px solid #00f; display: inline-block; line-height: 30px; }
dl { display: grid; grid-template-columns: 230px auto; grid-auto-rows: 38px; line-height: 38px; }
dl .date { word-spacing: 0; letter-spacing: 1.600px; }
dt { font-weight: bold; font-size: 27px; word-spacing: 9px; letter-spacing: 3.200px; }
dt i, dl .bi { font-style: italic; font-weight: bold; }
dl .bi { letter-spacing: .7px; word-spacing: 0; }
.items { margin-left: 211px; width: 1328px; border: solid #000; border-width: 3px 2px 2px 3px; font-family: "Noto Sans CJK KR", sans-serif; }
.ir { display: grid; grid-template-columns: 567px 202px 277px auto; height: 83.300px; }
.ir span { border-right: 2px solid #000; display: flex; align-items: center; }
.ir span:last-child { border-right: 0; }
.ir.g { background: #d9d9d9; }
.th { background: #c0e4f5; font-weight: bold; font-size: 33px; height: 84px; border-bottom: 2px solid #000; }
.th span { padding: 0 0 3px 45px; }
.th span:nth-child(n+3) { padding-left: 13px; }
.td { font-size: 35px; font-weight: 300; }
.td span { padding: 0 0 7px 41px; }
.td span:first-child { padding-left: 56px; font-size: 30px; word-spacing: 8px; }
.td span:nth-child(n+3) { padding: 0 13px 7px 0; justify-content: flex-end; letter-spacing: .8px; }
.sums { margin-left: 211px; width: 1328px; display: grid; grid-template-columns: 1047px 281px; grid-template-rows: 85px 82px 87px; font: 300 35px/1.2 "Noto Sans CJK KR", sans-serif; text-align: right; }
.sums b { padding: 0 14px 5px 0; align-self: center; font-size: 32.500px; font-weight: bold; }
.sums span { border: solid #000; border-width: 0 2px 2px; display: flex; align-items: center; justify-content: flex-end; padding: 0 13px 6px 0; letter-spacing: .8px; }
.sums .blue { background: #c9ecfc; border-bottom: 0; padding-bottom: 3px; }
.sums .black { background: #000; color: #fff; padding-bottom: 3px; }

/* Browser */
.right { display: flex; flex-direction: column; }
.chrome { height: 1395px; border: 2px solid #767676; background: #fff; }
.ctabs { height: 60px; background: #2b2b2b; display: grid; align-items: center; padding-left: 10px; grid-template-columns: 51px 369px 1308px 69px 68px auto; }
.cdd { width: 40px; height: 42px; border-radius: 14px; background: #3c3c3c; color: #eee; display: grid; place-items: center; }
.ctab { width: 346px; height: 52px; margin-top: 8px; border-radius: 14px 14px 0 0; background: #3c3c3c; color: #e6e6e6; font-size: 18px; display: grid; grid-template-columns: 37px 268px auto; align-items: center; padding: 0 0 7px 11px; }
.x { stroke: #e6e6e6; stroke-width: 1.800; }
.w { stroke: #9a9a9a; stroke-width: 1.600; fill: none; }
.cbar { height: 70px; background: #3c3c3c; display: grid; align-items: center; padding-left: 23px; grid-template-columns: 54px 54px 55px 49px 1449px 52px 27px 52px 66px auto; }
.cbar svg { fill: none; stroke: #d2d2d2; stroke-width: 2.200; }
.cbar .dm { stroke: #858585; }
.cbar .dots { fill: #d2d2d2; stroke: none; }
.omni { width: 1421px; height: 51px; border-radius: 26px; background: #282828; color: #e8e8e8; font-size: 20px; display: grid; grid-template-columns: 48px 1318px auto; align-items: center; padding-left: 6px; }
.omni i { width: 36px; height: 36px; border-radius: 50%; background: #3c3c3c; display: grid; place-items: center; }
.cs { width: 2px; height: 24px; background: #5c5c5c; }
.rainbow { height: 3px; background: linear-gradient(90deg, #ff4b4b, #fffd80); }
.deploy { height: 68px; display: flex; align-items: center; justify-content: space-between; padding: 0 29px 2px 1781px; font-size: 19px; color: #31333f; }
.app-main { width: 1055px; margin-left: 432px; color: #31333f; }
h2 { margin-top: 96px; height: 84px; font-size: 71.200px; line-height: 80px; display: flex; align-items: flex-start; word-spacing: -5px; }
h2 span { font-size: 60px; margin: 5px 25px 0 15px; }
h2 svg { margin-top: 13px; }
label { display: block; margin-top: 29px; height: 28px; line-height: 26px; font-size: 21.500px; }
.drop { margin: 11px 0 0 1px; height: 119px; width: 1050px; border-radius: 8px; background: #f0f2f6; display: grid; grid-template-columns: 79px 770px auto; align-items: center; padding-left: 22px; }
.drop p { font-size: 22.500px; line-height: 39px; letter-spacing: -.7px; }
.drop small { font-size: 19px; line-height: 39px; color: #8a8c96; letter-spacing: -.5px; }
.drop button { width: 159px; height: 57px; font-size: 22px; padding-bottom: 3px; }
.file { height: 92px; display: grid; grid-template-columns: 68px 121px 782px auto; align-items: center; padding-left: 36px; font-size: 24px; }
.file span { margin-top: -7px; }
.file small { font-size: 20px; color: #8a8c96; letter-spacing: -.4px; margin-top: -3px; }
.b1 { margin-top: 13px; width: 252px; height: 57px; font-size: 25px; padding-bottom: 4px; }
.df { margin-top: 26px; width: 858px; height: 106px; border: 1px solid #e3e4e8; border-radius: 10px; overflow: hidden; font-size: 21px; }
.dh, .dr { display: grid; grid-template-columns: 83px 133px 81px 87px 81px 81px 112px 87px auto; height: 53px; line-height: 47px; }
.dh { background: #f8f9fb; color: #868a99; border-bottom: 2px solid #e3e4e8; letter-spacing: .3px; }
.dh span, .dr span { padding-left: 10px; border-right: 1px solid #e3e4e8; overflow: hidden; }
.dr { line-height: 50px; }
.dr span { font-size: 20px; letter-spacing: -.5px; }
.dr span:nth-child(n+7), .dr span:nth-child(3) { letter-spacing: .6px; }
.dr span:first-child { color: #868a99; padding-left: 57px; }
.avg { margin-top: 36px; height: 40px; font-size: 24.500px; display: flex; align-items: center; gap: 6px; padding-bottom: 5px; }
code { margin-top: 9px; height: 30px; padding: 0 7px; border-radius: 6px; background: #f8f9fb; color: #21a650; font: 18px/31px "Liberation Mono", monospace; }
.b2 { margin-top: 23px; width: 329px; height: 55px; font-size: 25px; letter-spacing: -.1px; padding-bottom: 4px; }
.ok { margin-top: 26px; height: 84px; border-radius: 12px; background: #e8f9ee; color: #177233; font-size: 24px; line-height: 78px; padding-left: 24px; }

/* Spreadsheet */
.xl-wrap { background: #000; padding: 6px 0 6px 8px; height: 693px; }
.xl { border: 2px solid #107c41; border-right: 0; border-radius: 12px 0 0 12px; height: 681px; background: #ebebeb; overflow: hidden; }
.k { fill: none; stroke: #333; stroke-width: 1.700; }
.kw { fill: none; stroke: #fff; stroke-width: 1.600; }
.dimx { opacity: .45; }
.xt { height: 73px; display: grid; align-items: center; padding-left: 23px; font-size: 18.500px; grid-template-columns: 48px 87px 78px 44px 31px 26px 30px 31px 51px 93px 143px 66px 833px 66px 82px 72px 72px auto; }
.saved { letter-spacing: .3px; }
.tog { width: 64px; height: 30px; border: 1.500px solid #666; border-radius: 15px; background: #fff; display: flex; align-items: center; gap: 10px; padding-left: 3px; font-size: 18px; }
.tog i { width: 21px; height: 21px; border-radius: 50%; background: #616161; }
.xs { width: 517px; height: 47px; border-radius: 6px; background: #fafafa; border: 1px solid #d4d4d4; border-bottom: 2px solid #c6c6c6; display: flex; align-items: center; gap: 20px; padding-left: 31px; color: #666; font-size: 20px; }
.xm { height: 44px; display: grid; align-items: center; padding: 0 0 2px 27px; font-size: 20.500px; word-spacing: 6px; grid-template-columns: 73px 47px 67px 174px 68px 86px 68px 67px 120px 918px 92px auto; }
.au { font-size: 19.500px; }
.memo, .share { height: 36px; display: flex; align-items: center; gap: 7px; border-radius: 6px; margin-top: -1px; padding-left: 8px; }
.memo { width: 80px; border: 1px solid #777; background: #fff; font-size: 20px; }
.share { width: 96px; background: #107c41; color: #fff; padding-left: 6px; font-size: 20px; }
.xf { height: 62px; border-top: 1px solid #cfcfcf; background: linear-gradient(#e2e2e2, #f0f0f0 10px); display: grid; align-items: center; padding-left: 11px; grid-template-columns: 165px 18px 116px auto; font-size: 20px; }
.xf > span { height: 40px; background: #fff; border: 1px solid #d2d2d2; border-radius: 6px; display: flex; align-items: center; }
.nb { width: 152px; justify-content: space-between; padding: 0 8px 0 7px; }
.fx { width: 110px; gap: 13px; padding-left: 9px; }
.fx em { font: italic 29px "Liberation Serif", serif; }
.fi { width: 1598px; justify-content: space-between; padding: 0 7px 2px 16px; font-size: 22.500px; word-spacing: 5px; }
.xsheet { display: flex; height: 417px; }
.cells { width: 1890px; background: #fff; }
.r { display: grid; height: 34px; grid-template-columns: 47px 177px 354px 180px 133px 122px 111px 203px 143px 104px 103px 104px 105px; line-height: 33px; font-size: 22.500px; color: #000; word-spacing: 5px; }
.r span { border-right: 1px solid #dcdcdc; border-bottom: 1px solid #dcdcdc; padding-left: 3px; }
.r span:nth-child(2) { letter-spacing: -.1px; }
.r b { font-weight: normal; font-size: 20px; color: #444; background: #efefef; text-align: center; border-right: 1px solid #aaa; border-bottom: 1px solid #ddd; }
.r .n { text-align: right; padding-right: 3px; letter-spacing: -.5px; }
.r .d { word-spacing: 2px; }
.hd { height: 33px; background: #efefef; border-bottom: 2px solid #a8a8a8; font-size: 20px; color: #444; }
.hd span { border-bottom: 0; padding: 0; text-align: center; line-height: 32px; }
.hd span svg { margin: 4px 0 0 16px; }
.r .act { background: #dedede; color: #187245; }
.cur { box-shadow: inset 0 0 0 2px #187245; }
.last { height: 10px; }
.vs { width: 20px; background: #f3f3f3; display: flex; flex-direction: column; align-items: center; padding-left: 4px; padding-top: 9px; }
.vs i { width: 11px; height: 189px; border-radius: 5px; background: #707070; margin: 8px 0 186px; }
.xtabs { height: 48px; border-top: 1px solid #d0d0d0; display: grid; align-items: center; padding-left: 34px; grid-template-columns: 50px 82px 182px 807px 28px auto; }
.nv { fill: none; stroke: #999; stroke-width: 1.600; }
.st { width: 114px; height: 42px; align-self: start; background: #fff; border-radius: 0 0 6px 6px; padding: 6px 12px; font-size: 19.500px; color: #111; }
.st span { display: block; border-bottom: 3px solid #107c41; line-height: 26px; height: 31px; }
.hs { width: 710px; height: 26px; border-radius: 6px; background: #f6f6f6; display: flex; align-items: center; padding-left: 4px; gap: 3px; }
.hs i { flex: none; width: 626px; height: 12px; border-radius: 6px; background: #707070; margin: 0 43px 0 2px; }
.xstat { height: 33px; background: #f4f4f4; border-top: 1px solid #fff; display: grid; align-items: center; padding-left: 15px; font-size: 17.500px; grid-template-columns: 64px 28px 1346px 78px 60px 49px 207px auto; }
.acc { font-size: 18px; word-spacing: 4px; }
.vw { width: 60px; height: 32px; background: #dadada; display: grid; place-items: center; }

/* Taskbar */
.taskbar { height: 72px; border-top: 2px solid #b0b0b0; background: #dadada; display: grid; align-items: center; padding-left: 28px; color: #1c1c1c;
  grid-template-columns: 48px 1196px 57px 346px 66px 66px 69px 63px 65px 68px 65px 67px 54px 74px 70px 65px 68px 746px 44px 49px 52px 56px 54px 34px 50px 109px 46px auto; }
.wx { font-size: 18px; line-height: 22px; margin-top: -3px; }
.wx p + p { font-size: 18.500px; word-spacing: 3px; }
.ts { width: 326px; height: 46px; border-radius: 23px; background: #f3f3f3; border: 1px solid #c4c4c4; display: grid; grid-template-columns: 37px 197px auto; align-items: center; padding-left: 16px; font-size: 20px; color: #555; }
.lw { color: #fff; font-size: 13px; margin-right: 16px; }
.lh { color: #fff; font-size: 22px; }
.hot { width: 57px; height: 57px; border-radius: 7px; background: #f0f0f0; display: grid; place-items: center; }
.ta { font-size: 25px; font-weight: 300; }
.th2 { font-size: 22px; }
.clk { width: 94px; text-align: right; font-size: 17.800px; line-height: 24px; margin-top: -3px; }
.pre { font-size: 9px; padding: 22px 0 0 9px; color: #222; }
.badge { position: absolute; left: 53px; top: 2100px; color: #fff; font-size: 15px; font-weight: normal; }
.run { position: absolute; top: 2149px; width: 8px; height: 5px; border-radius: 3px; background: #868686; }
.r1 { left: 1755px; } .r2 { left: 1953px; } .r3 { left: 2481px; } .r4 { left: 2547px; }
.act5 { left: 2275px; width: 24px; background: #0078d4; }
.marks { position: absolute; left: 0; top: 0; }
```
